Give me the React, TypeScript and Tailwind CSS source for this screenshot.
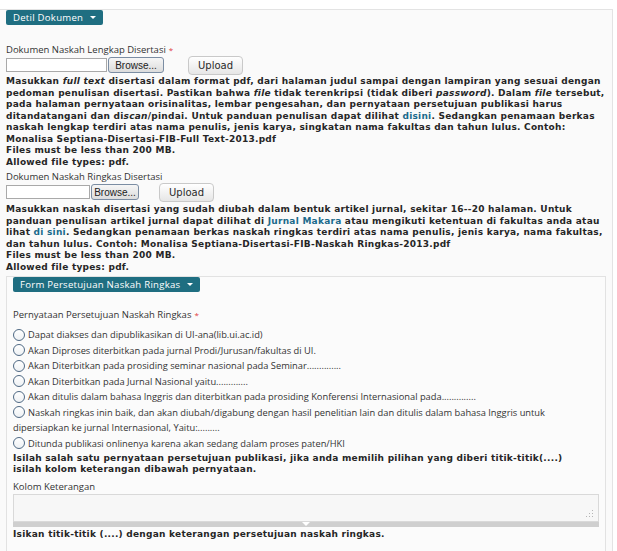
import React from 'react'

const labelFont = { fontFamily: '"Open Sans", "DejaVu Sans", sans-serif' }
const boldFont = { fontFamily: '"DejaVu Sans", Verdana, sans-serif' }

// small teal toggle used for the collapsible sections
function SectionToggle({ title }: { title: string }) {
  return (
    <div
      className="flex w-fit items-center h-[15px] pl-[7px] pr-[7px] bg-[#1f6e81] rounded-[2px] text-white text-[9.6px] leading-[15px] tracking-[0.25px] gap-[7px]"
      style={labelFont}
    >
      <span>{title}</span>
      <span className="w-0 h-0 border-x-[3px] border-x-transparent border-t-[3px] border-t-white" />
    </div>
  )
}

function FileRow({ field, browse, gap }: { field: number; browse: number; gap: number }) {
  return (
    <div className="flex items-start h-[19px]">
      <div className="mt-[2px] h-[14px] bg-white border border-[#a9a9a9]" style={{ width: field }} />
      <div
        className="ml-[1px] mt-[1px] h-[16px] flex items-center justify-center rounded-[3px] border border-[#7b8da3] bg-gradient-to-b from-[#f6f6f6] to-[#dcdcdc] text-[10px] text-[#222]"
        style={{ width: browse, fontFamily: '"Liberation Sans", Arial, sans-serif' }}
      >
        Browse...
      </div>
      <div
        className="h-[19px] w-[55px] flex items-center justify-center rounded-[4px] border border-[#c9c9c9] bg-gradient-to-b from-white to-[#e6e6e6] text-[10px] text-[#2a2a2a]"
        style={{ marginLeft: gap, ...boldFont }}
      >
        Upload
      </div>
    </div>
  )
}

function Required() {
  return <span className="text-[#e0383e] text-[8px] align-top ml-[3px]">*</span>
}

// line breaks inside an option are kept (whitespace-pre-line)
const radios = [
  'Dapat diakses dan dipublikasikan di UI-ana(lib.ui.ac.id)',
  'Akan Diproses diterbitkan pada jurnal Prodi/Jurusan/fakultas di UI.',
  'Akan Diterbitkan pada prosiding seminar nasional pada Seminar..............',
  'Akan Diterbitkan pada Jurnal Nasional yaitu.............',
  'Akan ditulis dalam bahasa Inggris dan diterbitkan pada prosiding Konferensi Internasional pada..............',
  'Naskah ringkas inin baik, dan akan diubah/digabung dengan hasil penelitian lain dan ditulis dalam bahasa Inggris untuk\ndipersiapkan ke jurnal Internasional, Yaitu:.........',
  'Ditunda publikasi onlinenya karena akan sedang dalam proses paten/HKI',
]

const help = 'text-[9px] leading-[11.5px] font-bold tracking-[0.25px] text-[#262626]'
const label = 'h-[12px] leading-[12px] text-[9.5px] text-[#333]'

export default function App() {
  return (
    <div className="min-h-screen bg-white">
      <div className="mt-[9px] mr-[4px] border-t border-r border-[#e3e3e3] bg-[#fafafa] pl-[6px] pr-[1px] pb-[2px]">
        <SectionToggle title="Detil Dokumen" />

        {/* naskah lengkap */}
        <div className={`mt-[19px] ${label}`} style={labelFont}>
          Dokumen Naskah Lengkap Disertasi
          <Required />
        </div>
        <FileRow field={101} browse={56} gap={24} />
        <div className={`mt-[1px] ${help}`} style={boldFont}>
          Masukkan <i>full text</i> disertasi dalam format pdf, dari halaman judul sampai dengan lampiran yang sesuai dengan
          pedoman penulisan disertasi. Pastikan bahwa <i>file</i> tidak terenkripsi (tidak diberi <i>password</i>). Dalam{' '}
          <i>file</i> tersebut,
          <br />
          pada halaman pernyataan orisinalitas, lembar pengesahan, dan pernyataan persetujuan publikasi harus
          <br />
          ditandatangani dan di<i>scan</i>/pindai. Untuk panduan penulisan dapat dilihat{' '}
          <span className="text-[#1b6a8c]">disini</span>. Sedangkan penamaan berkas
          <br />
          naskah lengkap terdiri atas nama penulis, jenis karya, singkatan nama fakultas dan tahun lulus. Contoh:
          <br />
          Monalisa Septiana-Disertasi-FIB-Full Text-2013.pdf
          <br />
          Files must be less than 200 MB.
          <br />
          Allowed file types: pdf.
        </div>

        {/* naskah ringkas */}
        <div className={`mt-[3px] ${label}`} style={labelFont}>
          Dokumen Naskah Ringkas Disertasi
        </div>
        <FileRow field={84} browse={48} gap={20} />
        <div className={`mt-[2px] ${help}`} style={boldFont}>
          Masukkan naskah disertasi yang sudah diubah dalam bentuk artikel jurnal, sekitar 16--20 halaman. Untuk
          <br />
          panduan penulisan artikel jurnal dapat dilihat di <span className="text-[#1b6a8c]">Jurnal Makara</span> atau
          mengikuti ketentuan di fakultas anda atau
          <br />
          lihat <span className="text-[#1b6a8c]">di sini</span>. Sedangkan penamaan berkas naskah ringkas terdiri atas
          nama penulis, jenis karya, nama fakultas,
          <br />
          dan tahun lulus. Contoh: Monalisa Septiana-Disertasi-FIB-Naskah Ringkas-2013.pdf
          <br />
          Files must be less than 200 MB.
          <br />
          Allowed file types: pdf.
        </div>

        {/* form persetujuan */}
        <div className="mt-[3px] mr-[5px] border border-[#e2e2e2] bg-[#fbfbfb] pl-[6px] pr-[6px] pb-[11px]">
          <SectionToggle title="Form Persetujuan Naskah Ringkas" />
          <div className={`mt-[17px] ${label}`} style={labelFont}>
            Pernyataan Persetujuan Naskah Ringkas
            <Required />
          </div>
          <div className="mt-[6px] flex flex-col gap-[0.6px]">
            {radios.map((r) => (
              <div key={r} className="whitespace-pre-line text-[9.3px] leading-[15px] text-[#333]" style={labelFont}>
                <span className="inline-block align-middle -mt-[2px] mr-[3px] w-[12px] h-[12px] rounded-full border border-[#4f6984] bg-gradient-to-b from-white to-[#eef1f4]" />
                {r}
              </div>
            ))}
          </div>
          <div className={`mt-[2px] ${help}`} style={boldFont}>
            Isilah salah satu pernyataan persetujuan publikasi, jika anda memilih pilihan yang diberi titik-titik(....)
            <br />
            isilah kolom keterangan dibawah pernyataan.
          </div>
          <div className={`mt-[5px] ${label}`} style={labelFont}>
            Kolom Keterangan
          </div>
          <div className="mt-[1px]">
            <div className="relative h-[28px] border border-[#d9d9d9] bg-[#f7f7f7]">
              <svg className="absolute right-[4px] bottom-[3px]" width="8" height="8" viewBox="0 0 8 8">
                <g fill="#b5b5b5">
                  <rect x="6" y="0" width="1" height="1" />
                  <rect x="3" y="3" width="1" height="1" />
                  <rect x="6" y="3" width="1" height="1" />
                  <rect x="0" y="6" width="1" height="1" />
                  <rect x="3" y="6" width="1" height="1" />
                  <rect x="6" y="6" width="1" height="1" />
                </g>
              </svg>
            </div>
            <div className="h-[5px] bg-[#cfcfcf] flex justify-center">
              <span className="w-0 h-0 border-x-[4px] border-x-transparent border-t-[4px] border-t-white" />
            </div>
          </div>
          <div className={`mt-[2px] ${help}`} style={boldFont}>
            Isikan titik-titik (....) dengan keterangan persetujuan naskah ringkas.
          </div>
        </div>
      </div>
    </div>
  )
}
